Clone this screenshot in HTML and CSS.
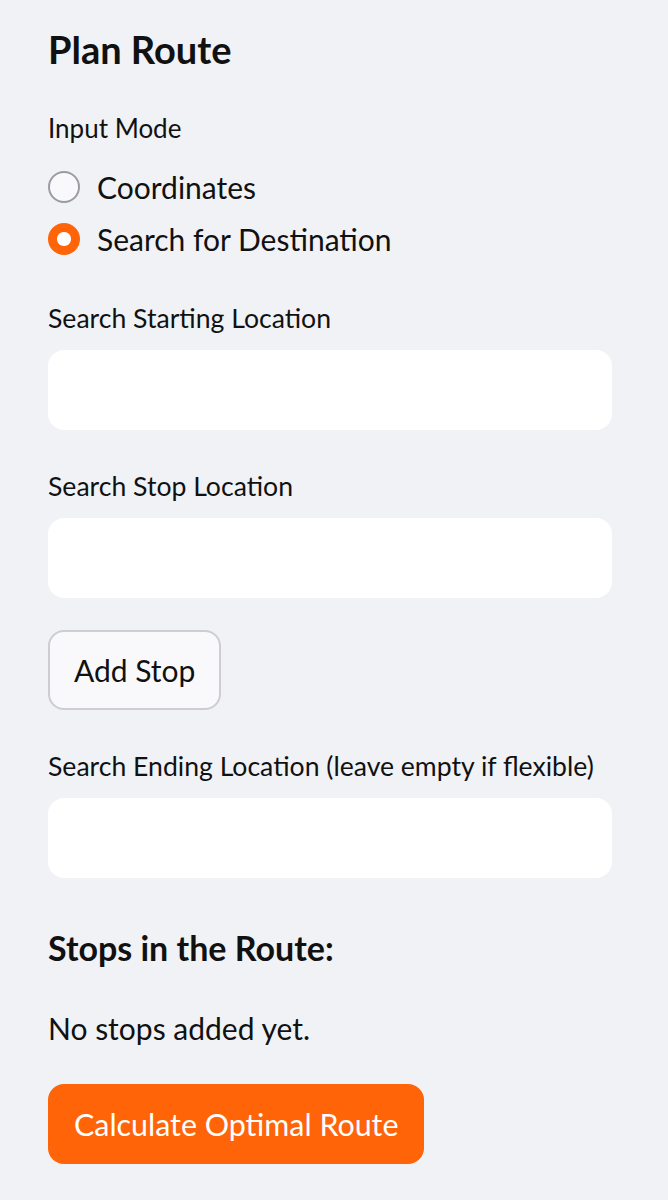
FILE: index.html
```html
<!DOCTYPE html>
<html lang="en">
<head>
<meta charset="utf-8">
<title>Plan Route</title>
<link rel="stylesheet" href="styles.css">
</head>
<body>
<aside class="sidebar">
  <h2 class="title">Plan Route</h2>

  <div class="field field-mode">
    <div class="label">Input Mode</div>
    <div class="radio-group">
      <label class="radio-row">
        <span class="radio"></span>
        <span class="radio-text">Coordinates</span>
      </label>
      <label class="radio-row">
        <span class="radio radio-on"></span>
        <span class="radio-text">Search for Destination</span>
      </label>
    </div>
  </div>

  <div class="field field-first">
    <div class="label">Search Starting Location</div>
    <input class="text-input" type="text">
  </div>

  <div class="field">
    <div class="label">Search Stop Location</div>
    <input class="text-input" type="text">
  </div>

  <button class="btn btn-secondary" type="button">Add Stop</button>

  <div class="field">
    <div class="label">Search Ending Location (leave empty if flexible)</div>
    <input class="text-input" type="text">
  </div>

  <h3 class="subtitle">Stops in the Route:</h3>
  <p class="note">No stops added yet.</p>

  <button class="btn btn-primary" type="button">Calculate Optimal Route</button>
</aside>
</body>
</html>
```
FILE: styles.css
```css
html, body {
  margin: 0;
  padding: 0;
  background: #f0f2f6;
}

body {
  font-family: "Lato", "Noto Sans", sans-serif;
  color: #111111;
  width: 668px;
  height: 1200px;
  overflow: hidden;
}

.sidebar {
  display: flex;
  flex-direction: column;
  align-items: flex-start;
  padding: 19px 56px 0 48px;
}

.title {
  margin: 0;
  font-size: 38px;
  font-weight: 700;
  line-height: 60px;
}

.field {
  display: flex;
  flex-direction: column;
  align-self: stretch;
  margin-top: 36px;
}

.field-mode {
  margin-top: 29px;
}

.field-first {
  margin-top: 33px;
}

.label {
  font-size: 26.6px;
  line-height: 40px;
  margin-bottom: 12px;
}

.field-mode .label {
  font-size: 26px;
  margin-bottom: 13px;
}

.radio-group {
  display: flex;
  flex-direction: column;
}

.radio-row {
  display: flex;
  align-items: center;
  height: 52px;
}

.radio {
  width: 28px;
  height: 28px;
  border-radius: 50%;
  border: 2px solid #9b9ba0;
  background: #f9f9fb;
  margin-right: 17px;
  flex: none;
}

.radio-on {
  width: 32px;
  height: 32px;
  border: none;
  background: radial-gradient(circle, #ffffff 0 6.5px, #ff6408 7.5px);
}

.radio-text {
  font-size: 30px;
  line-height: 40px;
}

.text-input {
  display: block;
  box-sizing: border-box;
  height: 80px;
  width: 100%;
  border: none;
  border-radius: 16px;
  background: #ffffff;
  margin: 0;
  outline: none;
}

.btn {
  box-sizing: border-box;
  height: 80px;
  border-radius: 16px;
  font-family: inherit;
  font-size: 30px;
  cursor: pointer;
}

.btn-secondary {
  margin-top: 32px;
  padding: 0 24px;
  background: #f9f9fb;
  border: 2px solid #cdcdd2;
  color: #111111;
}

.btn-primary {
  margin-top: 36px;
  padding: 0 26px;
  font-size: 30.4px;
  background: #ff6408;
  border: none;
  color: #ffffff;
}

.subtitle {
  margin: 46px 0 0;
  font-size: 34px;
  font-weight: 700;
  line-height: 48px;
}

.note {
  margin: 36px 0 0;
  font-size: 30px;
  line-height: 40px;
}
```
